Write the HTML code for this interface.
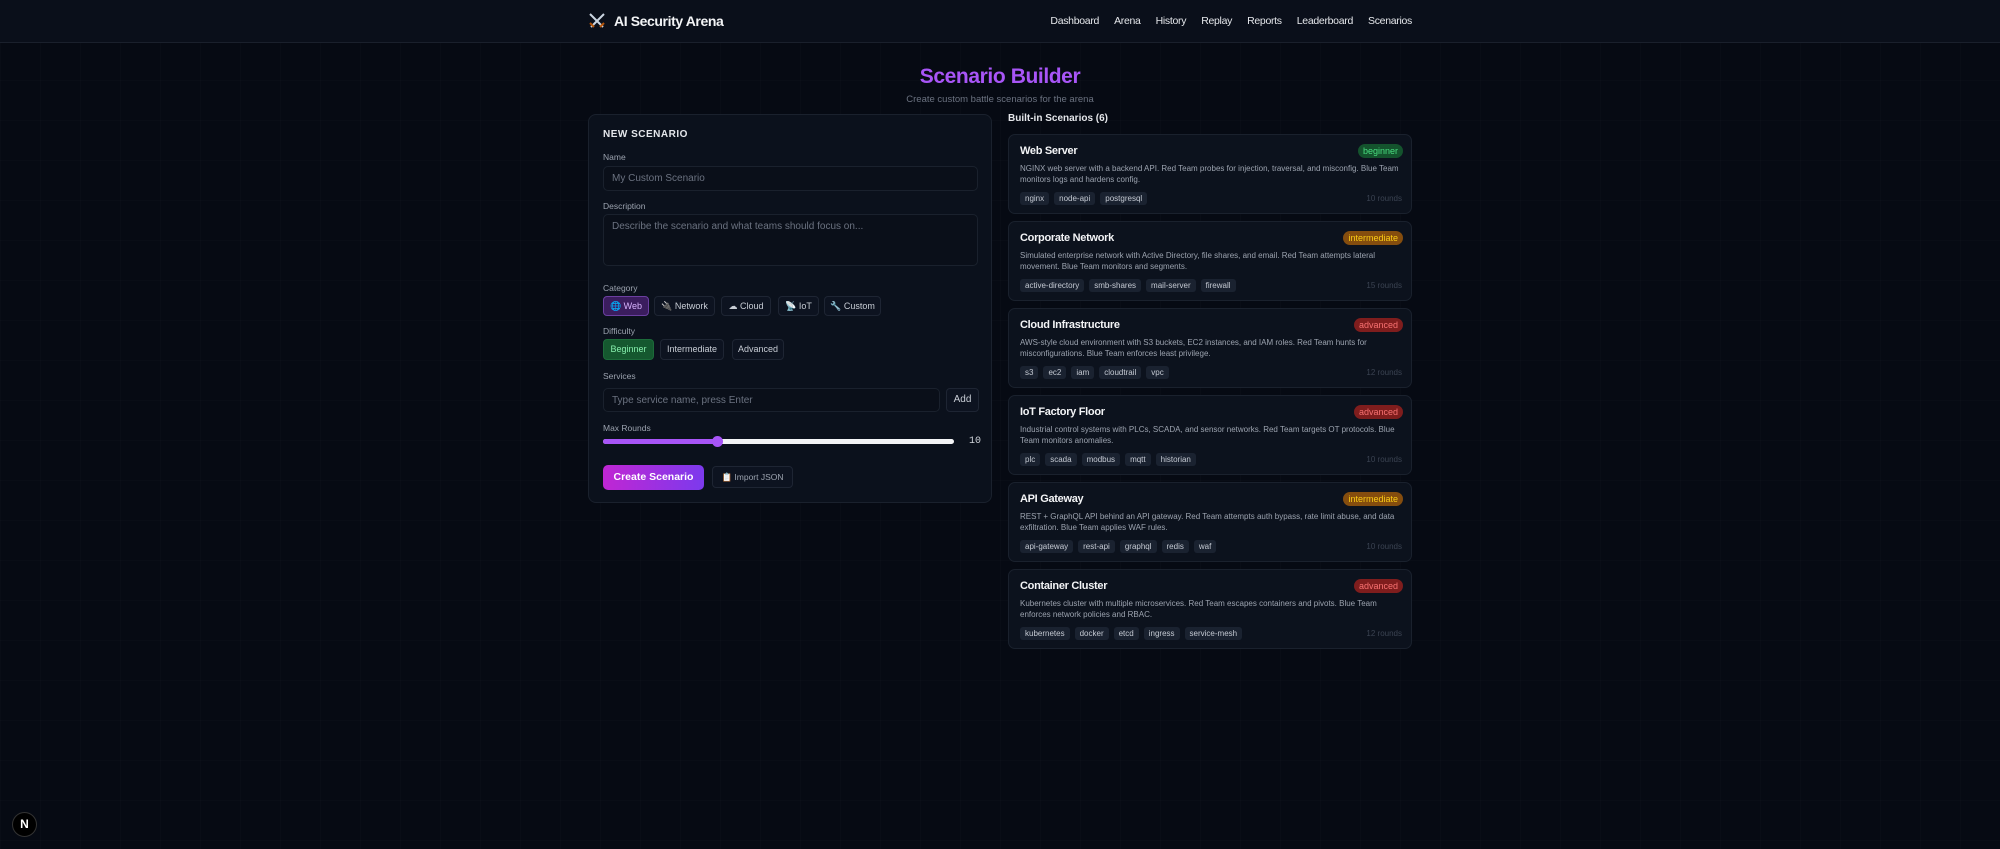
<!DOCTYPE html>
<html><head><meta charset="utf-8"><style>
*{box-sizing:border-box;margin:0;padding:0}
body{width:2000px;height:849px;overflow:hidden;background:#060a13;font-family:"Liberation Sans",sans-serif;color:#e5e7eb;position:relative;
background-image:linear-gradient(rgba(255,255,255,.01) 1px,transparent 1px),linear-gradient(90deg,rgba(255,255,255,.01) 1px,transparent 1px);background-size:40px 40px}
.hdr{position:absolute;left:0;top:0;width:2000px;height:43px;background:#0a0f1a;border-bottom:1px solid #1a202c}
.logo{position:absolute;left:588px;top:12px;font-size:14px;font-weight:bold;color:#f3f4f6;letter-spacing:-.4px}
.logo svg{vertical-align:-4px;margin-right:8px}
.nav{position:absolute;right:588px;top:15px;font-size:10.5px;color:#e5e7eb;letter-spacing:-.3px}
.nav span{margin-left:15px}
h1{position:absolute;left:0;width:2000px;text-align:center;top:65px;font-size:21px;color:#a855f7;letter-spacing:-.4px}
.sub{position:absolute;left:0;width:2000px;text-align:center;top:94px;font-size:9.5px;color:#6b7280}
.panel{position:absolute;left:588px;top:114px;width:404px;height:389px;background:#0b111c;border:1px solid #1a212d;border-radius:8px}
.a{position:absolute}
.lbl{font-size:8.5px;color:#9ca3af}
.inp{background:#0a0f19;border:1px solid #1a212d;border-radius:5px;font-size:10px;color:#6b7280;padding:6px 8px}
.pill{position:absolute;border:1px solid #1e2533;background:#0d1320;border-radius:4px;font-size:9px;color:#c8cdd5;text-align:center;line-height:18px}
.card{position:absolute;left:1008px;width:404px;height:80px;background:#0c121d;border:1px solid #1a212d;border-radius:7px}
.ct{position:absolute;left:11px;top:10px;font-size:11px;font-weight:bold;color:#f3f4f6;letter-spacing:-.3px}
.cd{position:absolute;left:11px;top:29px;font-size:8px;line-height:10.5px;color:#9ca3af;white-space:nowrap}
.tags{position:absolute;left:11px;top:57px;display:flex;gap:5px}
.tags span{background:#1a2230;color:#c5cad3;font-size:8px;padding:2px 5px;border-radius:3px}
.rd{position:absolute;right:9px;top:59px;font-size:8px;color:#3b4352}
.bd{position:absolute;right:8px;top:9px;font-size:9px;padding:2px 5px;border-radius:8px}
.beg{background:#14532d;color:#4ade80}.int{background:#854d0e;color:#facc15}.adv{background:#7f1d1d;color:#f87171}
</style></head><body>
<div class="hdr">
<div class="logo"><svg width="18" height="18" viewBox="0 0 18 18"><path d="M2 2 L15 15 M16 2 L3 15" stroke="#cbd5e1" stroke-width="2"/><path d="M12 15 L16 11 M6 15 L2 11" stroke="#b45309" stroke-width="2"/></svg>AI Security Arena</div>
<div class="nav"><span>Dashboard</span><span>Arena</span><span>History</span><span>Replay</span><span>Reports</span><span>Leaderboard</span><span>Scenarios</span></div>
</div>
<h1>Scenario Builder</h1>
<div class="sub">Create custom battle scenarios for the arena</div>

<div class="panel">
<div class="a" style="left:14px;top:14px;font-size:10px;font-weight:bold;letter-spacing:.5px;color:#e5e7eb">NEW SCENARIO</div>
<div class="a lbl" style="left:14px;top:37px">Name</div>
<div class="a inp" style="left:14px;top:51px;width:375px;height:25px">My Custom Scenario</div>
<div class="a lbl" style="left:14px;top:86px">Description</div>
<div class="a inp" style="left:14px;top:99px;width:375px;height:52px">Describe the scenario and what teams should focus on...</div>
<div class="a lbl" style="left:14px;top:168px">Category</div>
<div class="pill" style="left:14px;top:181px;width:46px;height:20px;background:#3b1d5e;border-color:#6b3fa0;color:#d8b4fe">🌐 Web</div>
<div class="pill" style="left:65px;top:181px;width:61px;height:20px">🔌 Network</div>
<div class="pill" style="left:132px;top:181px;width:50px;height:20px">☁ Cloud</div>
<div class="pill" style="left:189px;top:181px;width:41px;height:20px">📡 IoT</div>
<div class="pill" style="left:235px;top:181px;width:57px;height:20px">🔧 Custom</div>
<div class="a lbl" style="left:14px;top:211px">Difficulty</div>
<div class="pill" style="left:14px;top:224px;width:51px;height:21px;background:#15582f;border-color:#1c6b3a;color:#86efac">Beginner</div>
<div class="pill" style="left:71px;top:224px;width:64px;height:21px">Intermediate</div>
<div class="pill" style="left:143px;top:224px;width:52px;height:21px">Advanced</div>
<div class="a lbl" style="left:14px;top:256px">Services</div>
<div class="a inp" style="left:14px;top:273px;width:337px;height:24px">Type service name, press Enter</div>
<div class="pill" style="left:357px;top:273px;width:33px;height:24px;line-height:22px;font-size:10px">Add</div>
<div class="a lbl" style="left:14px;top:308px">Max Rounds</div>
<div class="a" style="left:14px;top:324px;width:351px;height:5px;background:#f3f4f6;border-radius:3px"></div>
<div class="a" style="left:14px;top:324px;width:115px;height:5px;background:#a855f7;border-radius:3px"></div>
<div class="a" style="left:123px;top:321px;width:11px;height:11px;background:#a855f7;border-radius:50%"></div>
<div class="a" style="left:380px;top:321px;font-size:10px;font-family:'Liberation Mono',monospace;color:#d1d5db">10</div>
<div class="a" style="left:14px;top:350px;width:101px;height:25px;border-radius:5px;background:linear-gradient(90deg,#c026d3,#7c3aed);font-size:10.5px;font-weight:bold;color:#fff;text-align:center;line-height:25px">Create Scenario</div>
<div class="pill" style="left:123px;top:351px;width:81px;height:22px;line-height:20px;font-size:8.5px;color:#9ca3af">📋 Import JSON</div>
</div>

<div class="a" style="left:1008px;top:113px;font-size:10px;font-weight:bold;color:#e5e7eb">Built-in Scenarios (6)</div>

<div class="card" style="top:134px"><div class="ct">Web Server</div><div class="bd beg">beginner</div>
<div class="cd">NGINX web server with a backend API. Red Team probes for injection, traversal, and misconfig. Blue Team<br>monitors logs and hardens config.</div>
<div class="tags"><span>nginx</span><span>node-api</span><span>postgresql</span></div><div class="rd">10 rounds</div></div>

<div class="card" style="top:221px"><div class="ct">Corporate Network</div><div class="bd int">intermediate</div>
<div class="cd">Simulated enterprise network with Active Directory, file shares, and email. Red Team attempts lateral<br>movement. Blue Team monitors and segments.</div>
<div class="tags"><span>active-directory</span><span>smb-shares</span><span>mail-server</span><span>firewall</span></div><div class="rd">15 rounds</div></div>

<div class="card" style="top:308px"><div class="ct">Cloud Infrastructure</div><div class="bd adv">advanced</div>
<div class="cd">AWS-style cloud environment with S3 buckets, EC2 instances, and IAM roles. Red Team hunts for<br>misconfigurations. Blue Team enforces least privilege.</div>
<div class="tags"><span>s3</span><span>ec2</span><span>iam</span><span>cloudtrail</span><span>vpc</span></div><div class="rd">12 rounds</div></div>

<div class="card" style="top:395px"><div class="ct">IoT Factory Floor</div><div class="bd adv">advanced</div>
<div class="cd">Industrial control systems with PLCs, SCADA, and sensor networks. Red Team targets OT protocols. Blue<br>Team monitors anomalies.</div>
<div class="tags"><span>plc</span><span>scada</span><span>modbus</span><span>mqtt</span><span>historian</span></div><div class="rd">10 rounds</div></div>

<div class="card" style="top:482px"><div class="ct">API Gateway</div><div class="bd int">intermediate</div>
<div class="cd">REST + GraphQL API behind an API gateway. Red Team attempts auth bypass, rate limit abuse, and data<br>exfiltration. Blue Team applies WAF rules.</div>
<div class="tags"><span>api-gateway</span><span>rest-api</span><span>graphql</span><span>redis</span><span>waf</span></div><div class="rd">10 rounds</div></div>

<div class="card" style="top:569px"><div class="ct">Container Cluster</div><div class="bd adv">advanced</div>
<div class="cd">Kubernetes cluster with multiple microservices. Red Team escapes containers and pivots. Blue Team<br>enforces network policies and RBAC.</div>
<div class="tags"><span>kubernetes</span><span>docker</span><span>etcd</span><span>ingress</span><span>service-mesh</span></div><div class="rd">12 rounds</div></div>

<div class="a" style="left:12px;top:812px;width:25px;height:25px;border-radius:50%;background:#000;border:1px solid #333;color:#fff;font-size:12px;font-weight:bold;text-align:center;line-height:23px">N</div>
</body></html>
